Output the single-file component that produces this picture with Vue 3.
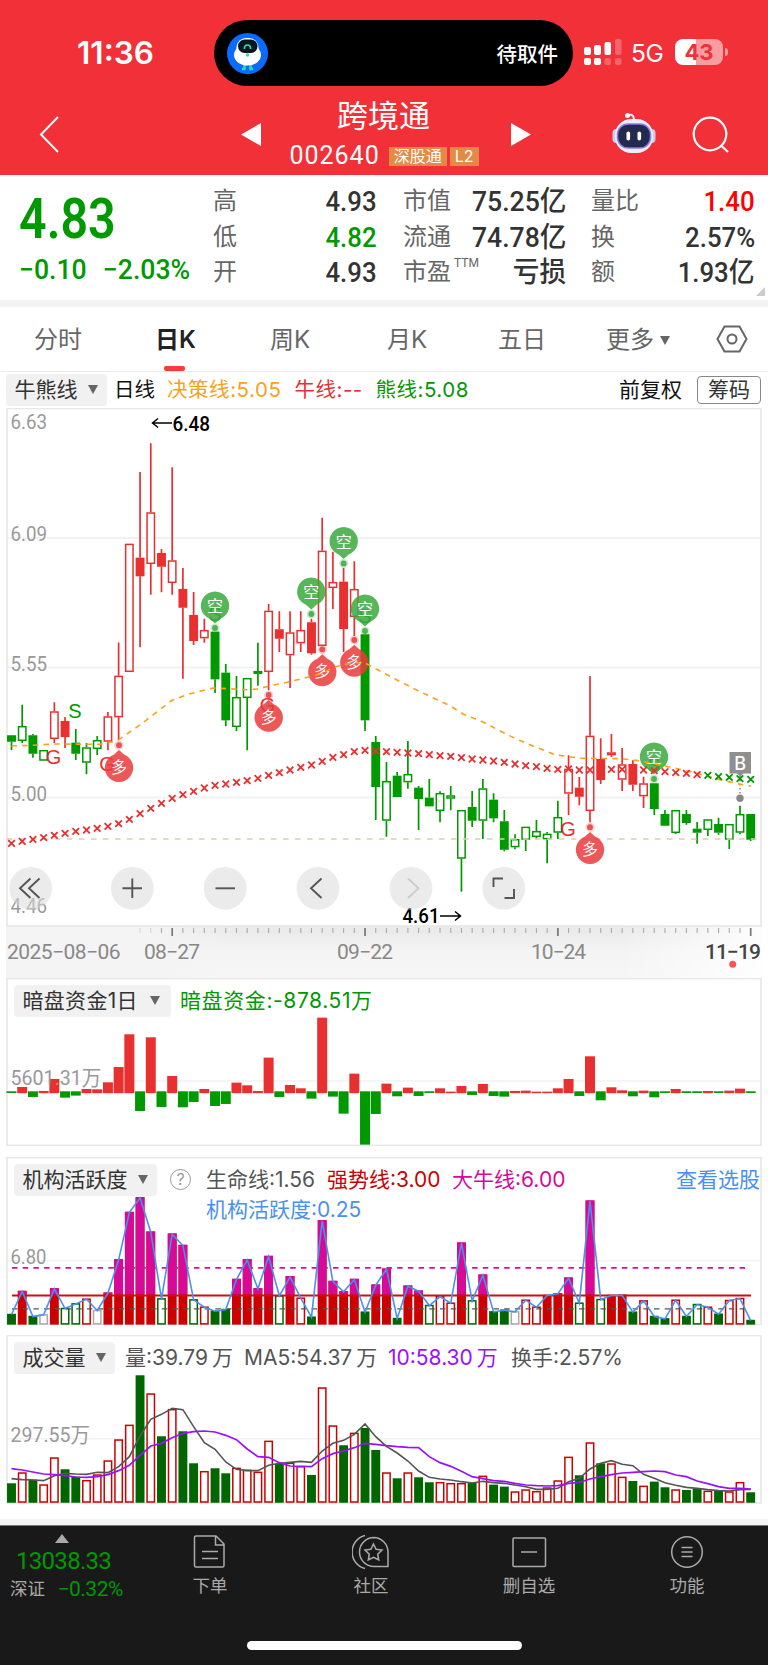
<script setup>
// Posición horizontal de cada día (70 sesiones)
const x = (i) => 11.5 + i * 10.713

const stats = [
  [{ k: '高', v: '4.93' }, { k: '低', v: '4.82', c: 'green' }, { k: '开', v: '4.93' }],
  [{ k: '市值', v: '75.25亿' }, { k: '流通', v: '74.78亿' }, { k: '市盈', sup: 'TTM', v: '亏损' }],
  [{ k: '量比', v: '1.40', c: 'red' }, { k: '换', v: '2.57%' }, { k: '额', v: '1.93亿' }]
]

// tipo, máximo, techo, suelo, mínimo. Mayúscula = vela rellena
const candles = [
  ['G', 735, 735.3, 741.7, 750], ['g', 704.7, 726, 741, 743], ['G', 734, 735.3, 753.7, 757.7], ['g', 750, 750, 760.7, 760.7],
  ['r', 702.3, 711.3, 739, 743], ['R', 717, 721, 737, 748], ['G', 729, 742.7, 753.7, 760], ['g', 743, 747.3, 762.7, 774.3],
  ['g', 736, 740, 749, 755], ['r', 712, 716.3, 741.7, 750.3], ['r', 642.5, 675.7, 717.3, 740], ['r', 543.7, 543.7, 672, 672],
  ['R', 472, 557.7, 576.3, 647.3], ['r', 443.3, 512.3, 564, 594.7], ['R', 549, 553, 566.7, 592.3], ['r', 467.3, 560.3, 583, 594.7],
  ['R', 568, 589, 607.7, 678.7], ['R', 592, 615, 641, 645], ['r', 618.7, 630, 638.3, 642.7], ['G', 631.7, 631.7, 679.3, 693],
  ['G', 664, 672.7, 720.3, 726.3], ['g', 676, 697, 727, 731], ['g', 678, 678, 698, 750.3], ['g', 642.7, 671, 673.9, 685.7],
  ['r', 604, 610.7, 672, 690.3], ['R', 611.3, 629.3, 638.7, 652], ['r', 611.3, 632.3, 655.3, 688], ['r', 611.3, 630, 643.3, 652],
  ['R', 618.7, 622.3, 653.3, 654.7], ['r', 517.7, 550.7, 646, 646], ['r', 551.7, 582, 588, 609], ['R', 568, 581.7, 629, 652],
  ['r', 561.3, 589, 617, 636], ['G', 634.3, 634.3, 720.3, 731], ['G', 736, 742, 787, 820], ['g', 762, 781, 820.7, 836.7],
  ['G', 772, 775.7, 797, 797], ['g', 741, 774, 782.3, 788.7], ['G', 786, 787.7, 799, 830], ['G', 779, 797.7, 806.3, 806.3],
  ['g', 791.3, 793, 811, 822.3], ['g', 786, 795.3, 798.7, 810.3], ['g', 810, 810, 858.7, 891.7], ['G', 791, 807, 820.7, 827],
  ['g', 779, 788.3, 820.7, 839], ['G', 793.3, 799.7, 818.3, 822.3], ['G', 810, 821.3, 849.7, 851.3], ['g', 834.3, 839, 847.3, 849.3],
  ['g', 826.7, 826.7, 839.7, 851], ['g', 820, 831, 837, 839], ['g', 832, 833.7, 839.3, 863.3], ['g', 800.7, 817, 832.7, 839],
  ['r', 755.3, 768.7, 793.7, 815], ['R', 777, 787.7, 796.7, 805.3], ['r', 676, 735.7, 811, 822.3], ['R', 738.3, 759, 780, 784],
  ['r', 734, 752.3, 755.3, 757], ['r', 748, 764.3, 779.7, 791], ['R', 760.3, 764, 784.7, 791], ['r', 776.7, 783.3, 796.3, 808],
  ['G', 783.3, 783.3, 809, 815], ['G', 810, 814, 825.7, 825.7], ['g', 810, 810, 833, 834], ['G', 810, 814, 823, 824.7],
  ['G', 822, 828.7, 832.7, 843.7], ['g', 819.3, 819.3, 830, 836], ['G', 817.7, 824, 832.7, 834.7], ['g', 824, 824, 839.7, 849],
  ['g', 805.7, 814, 832.7, 834.3], ['G', 814, 814, 839.7, 841]
]

// Línea toro/oso, dibujada con aspas
const bearLine = [
  610, 604, 598, 593, 586, 580, 574, 570, 565, 559, 551, 538, 521, 505, 490, 475, 464, 454, 444, 436, 432, 427, 422, 415,
  406, 398, 390, 382, 375, 364, 352, 344, 335, 331, 333, 335, 337, 339, 341, 344, 347, 349, 353, 357, 360, 363, 367,
  372, 377, 380, 385, 388, 387, 390, 390, 390, 388, 388, 389, 390, 392, 395, 398, 400, 404, 406, 410, 412, 416, 418
].map((v) => 640 + v / 3)

const cross = (i, y) => `M${x(i) - 3.3} ${y - 3.3}l6.6 6.6m0 -6.6l-6.6 6.6`

const decision =
  'M11.5 746L33 745.3L54 744L100 744.3L117 741L143 722.7L172 700.3L188 694.3L213 688L227 688.7L247 689.7L258 689L269 686L290 681.7L311 676.3' +
  'L322 673.7L333 667.5L354 662.3L367 664L397 680L418 690.7L450 705.7L463 714L483 722L508 735L528 744L555 754.7L581 758.3L621 758.7L641 761L668 766.7L695 772.7L721 780L741 784.3L751 786'

const shorts = [[215, 606], [311.3, 592], [343.7, 541.5], [365, 609], [654, 757]]
const longs = [[119, 767.5], [268.7, 717.3], [322.3, 671.7], [354.3, 662.3], [590, 849.5]]
const letters = [
  ['S', 75, 717.5], ['S', 215, 620.5], ['S', 365, 622.5], ['S', 654, 772],
  ['G', 53.5, 763.5], ['G', 107, 771], ['G', 267.5, 711.5], ['G', 568, 835.5]
]

const priceLabels = [['6.63', 429], ['6.09', 541], ['5.55', 670.5], ['5.00', 800.5], ['4.46', 912.5]]
const dates = [['2025-08-06', 7, 113.5], ['08-27', 144, 56], ['09-22', 337, 56], ['10-24', 531, 55]]
const ticks = Array.from({ length: 58 }, (_, n) => n + 12)
const majors = [15, 33, 51, 69]

// Flujo oculto: positivo rojo, negativo verde
const funds = [
  -2, 16, -14, 4, 40, -16, -10, 10, 9, 30, 76, 174, -56, 165, -44, 49, -45, -29, 10, -41, -35, 29, 21, 4,
  104, -14, 22, 12, -19, 224, -13, -64, 56, -157, -65, 26, -12, 14, -11, -2, 12, 2, 19, -8, 25, -11, -13,
  4, 5, 2, 2, 12, 40, -11, 108, -24, 15, 6, -12, 5, -15, -2, 10, -2, -2, 4, -2, 5, 11, -2
]

const activity = (
  'G1030 R961 G1036 w1031 R953 g1012 g998 r984 w1018 R966 R866 R724 R680 R783 g983 R789 R823 g986 r1008 G1020 G1015 R925 R866 R953 ' +
  'R856 g974 R917 r981 G1038 R749 R931 R962 R925 G1023 R942 R894 G1042 R945 R960 g1003 r976 r996 R816 g989 R912 G1022 G1017 ' +
  'w1022 r987 r1008 R973 R968 R921 g996 R690 g985 R973 R972 G1023 r989 G1036 G1043 r987 G1036 g1000 r1008 G1029 r988 r982 G1048'
).split(' ').map((s) => ({ t: s[0], y: 970 + s.slice(1) / 3 }))
const activityLine = activity.map((b, i) => `${x(i)},${b.y + 0.7}`).join(' ')

const volume = (
  'G475 r442 G464 r478 r397 G433 G455 r465 r448 r406 r343 r299 G151 r205 G334 r252 G319 G415 r438 G430 G445 r428 r434 r440 ' +
  'r347 G417 r413 r423 G450 r187 r301 G361 r323 G309 G375 r442 G460 r442 G457 G472 r471 r474 r474 G473 r452 G479 G485 ' +
  'r499 r493 r498 r487 r466 r395 G451 r352 G415 r415 r455 G468 r482 G470 G487 r493 G495 G492 r497 G497 r499 r471 G502'
).split(' ').map((s) => ({ t: s[0], y: 1325 + s.slice(1) / 3 }))

const line = (arr) => arr.map((v, i) => `${x(i)},${1325 + v / 3}`).join(' ')
const ma5 = line([
  461, 464, 465, 467, 452, 445, 447, 448, 442, 443, 425, 395, 333, 283, 268, 250, 254, 305, 353, 373, 411, 433, 437, 437,
  421, 415, 412, 409, 412, 378, 355, 346, 328, 297, 335, 364, 384, 408, 438, 457, 462, 465, 470, 474, 469, 473, 475,
  480, 485, 493, 493, 490, 470, 460, 432, 415, 407, 418, 422, 448, 460, 473, 481, 487, 490, 494, 497, 498, 494, 493
])
const ma10 = line([
  431, 435, 441, 447, 449, 452, 456, 457, 455, 449, 437, 421, 391, 363, 355, 338, 325, 320, 318, 321, 331, 344, 372, 395,
  397, 413, 423, 424, 425, 401, 386, 378, 368, 355, 358, 362, 365, 367, 368, 395, 413, 424, 439, 455, 461, 467, 469,
  475, 480, 482, 483, 482, 475, 472, 462, 455, 449, 444, 442, 440, 438, 440, 450, 455, 468, 476, 485, 490, 490, 492
])
</script>

<template>
  <div class="app">
    <header class="top">
      <div class="status">
        <span class="time">11:36</span>
        <div class="island">
          <svg width="41" height="41" viewBox="0 0 41 41">
            <circle cx="20.5" cy="20.5" r="20.5" fill="#0a6cff" />
            <path d="M17.500 31v5h-2.500M23.500 31v5h2.500" stroke="#1fe0b0" stroke-width="2.500" fill="none" />
            <ellipse cx="20.5" cy="22" rx="13.5" ry="10.5" fill="#fff" />
            <rect x="9.5" y="5" width="22" height="20" rx="9.5" fill="#fff" />
            <rect x="11" y="6.5" width="19.5" height="13.5" rx="6.5" fill="#0b1520" />
            <path d="M17.5 16v-1a3 3 0 0 1 6 0v1" stroke="#1fe0b0" stroke-width="1.6" fill="none" />
            <circle cx="20.5" cy="22" r="1.7" fill="#1fe0b0" />
          </svg>
          <span>待取件</span>
        </div>
        <svg class="signal" width="38" height="28" viewBox="0 0 38 28" fill="#fff">
          <rect x="0" y="8" width="7" height="8" rx="2" /><rect x="0" y="19" width="7" height="7" rx="2" />
          <rect x="10" y="6" width="7" height="10" rx="2" /><rect x="10" y="19" width="7" height="7" rx="2" />
          <rect x="20.5" y="3" width="6.5" height="13" rx="2" />
          <g opacity=".25"><rect x="20.5" y="19" width="6.5" height="7" rx="2" /><rect x="31" y="0" width="6.5" height="16" rx="2" /><rect x="31" y="19" width="6.5" height="7" rx="2" /></g>
        </svg>
        <span class="net">5G</span>
        <div class="battery"><b>43</b></div>
        <i class="nub"></i>
      </div>
      <div class="bar">
        <svg class="back" width="20" height="37" viewBox="0 0 20 37"><path d="M19 1L2 18.500L19 36" fill="none" stroke="#fff" stroke-width="2" /></svg>
        <svg class="prev" width="20" height="23"><path d="M0 11.500L20 0V23z" fill="#fff" /></svg>
        <div class="title">
          <h1>跨境通</h1>
          <div class="code"><span>002640</span><em>深股通</em><em class="l2">L2</em></div>
        </div>
        <svg class="next" width="20" height="23"><path d="M20 11.500L0 0V23z" fill="#fff" /></svg>
        <svg class="bot" width="44" height="42" viewBox="0 0 44 42">
          <path d="M17 3q5 -1 5 5" stroke="#e8ecfb" stroke-width="2" fill="none" /><circle cx="15.500" cy="3.500" r="2.500" fill="#fff" />
          <rect x="0.500" y="17" width="8" height="14" rx="4" fill="#c9cdf2" /><rect x="35.500" y="17" width="8" height="14" rx="4" fill="#c9cdf2" />
          <rect x="3" y="7" width="38" height="34" rx="16" fill="#eceefb" />
          <rect x="5.500" y="12" width="33" height="24" rx="10.500" fill="#222a4d" stroke="#8f7be8" stroke-width="1.500" />
          <rect x="14.500" y="19.500" width="3.600" height="9" rx="1.800" fill="#fff" /><rect x="25.500" y="19.500" width="3.600" height="9" rx="1.800" fill="#fff" />
        </svg>
        <svg class="search" width="38" height="38" viewBox="0 0 38 38" fill="none" stroke="#fff" stroke-width="2.200"><circle cx="18" cy="18" r="16.300" /><path d="M29 29.500L36 36" /></svg>
      </div>
    </header>

    <section class="quote">
      <div class="price">
        <strong>4.83</strong>
        <p><span>−0.10</span><span>−2.03%</span></p>
      </div>
      <dl v-for="(col, c) in stats" :key="c" :class="'col' + c">
        <div v-for="s in col" :key="s.k">
          <dt>{{ s.k }}<sup v-if="s.sup">{{ s.sup }}</sup></dt>
          <dd :class="s.c">{{ s.v }}</dd>
        </div>
      </dl>
      <i class="corner"></i>
    </section>

    <nav class="tabs">
      <span class="t1">分时</span>
      <span class="t2 active">日K</span>
      <span class="t3">周K</span>
      <span class="t4">月K</span>
      <span class="t5">五日</span>
      <span class="t6">更多<i class="caret"></i></span>
      <svg width="32" height="28" viewBox="0 0 32 28" fill="none" stroke="#666" stroke-width="2"><path d="M8.500 1.500H23.500L30.500 14L23.500 26.500H8.500L1.500 14z" /><circle cx="16" cy="14" r="4.500" /></svg>
    </nav>

    <div class="legend">
      <span class="chip">牛熊线<i class="caret"></i></span>
      <span class="day">日线</span>
      <span class="w1 orange">决策线:5.05</span>
      <span class="w2 bull">牛线:--</span>
      <span class="green">熊线:5.08</span>
      <span class="fq">前复权</span>
      <span class="cm">筹码</span>
    </div>

    <svg class="kline" width="768" height="570" viewBox="0 408 768 570">
      <defs>
        <linearGradient id="axis" x1="0" y1="0" x2="0" y2="1"><stop offset="0" stop-color="#e9e9e9" /><stop offset=".5" stop-color="#f4f4f4" /><stop offset="1" stop-color="#f6f6f6" /></linearGradient>
        <linearGradient id="left" x1="0" y1="0" x2="1" y2="0"><stop offset=".6" stop-color="#f4f4f4" /><stop offset="1" stop-color="#f4f4f4" stop-opacity="0" /></linearGradient>
        <linearGradient id="fade" x1="0" y1="0" x2="1" y2="0"><stop offset="0" stop-color="#fff" stop-opacity="0" /><stop offset="1" stop-color="#fff" stop-opacity=".9" /></linearGradient>
      </defs>
      <rect x="6" y="926" width="756" height="52" fill="url(#axis)" />
      <rect x="6" y="926" width="230" height="52" fill="url(#left)" />
      <rect x="620" y="926" width="142" height="52" fill="url(#fade)" />
      <path d="M7 538H761M7 667.500H761M7 797.500H761" stroke="#f2f2f2" stroke-width="2" />
      <rect x="7" y="408.500" width="754" height="517.500" fill="none" stroke="#e8e8e8" stroke-width="1.700" />

      <g class="din" font-size="21" fill="#999">
        <text v-for="p in priceLabels" :key="p[0]" x="10.500" :y="p[1]" textLength="36.500" lengthAdjust="spacingAndGlyphs">{{ p[0] }}</text>
      </g>

      <g v-for="(c, i) in candles" :key="i" :class="'k-' + c[0]">
        <path :d="`M${x(i)} ${c[1]}V${c[2]}M${x(i)} ${c[3]}V${c[4]}`" stroke-width="1.700" />
        <rect :x="x(i) - 3.700" :y="c[2] + 0.700" width="7.400" :height="Math.max(c[3] - c[2] - 1.400, 1.200)" stroke-width="1.500" />
      </g>

      <path d="M7 839H761" stroke="#e2cbab" stroke-width="1.500" stroke-dasharray="5.500 6.500" />
      <g class="letters" font-size="20" text-anchor="middle">
        <text v-for="(l, n) in letters" :key="n" :x="l[1]" :y="l[2]" :fill="l[0] === 'S' ? '#090' : '#e93030'">{{ l[0] }}</text>
      </g>

      <g fill="#3aa93c" fill-opacity=".85">
        <g v-for="(p, n) in shorts" :key="n">
          <path :d="`M${p[0]} ${p[1] + 17.500}l-5 -4.500a14.200 14.200 0 1 1 10 0z`" />
          <circle :cx="p[0]" :cy="p[1] + 22" r="4.600" fill-opacity=".25" />
          <circle :cx="p[0]" :cy="p[1] + 22" r="2.900" />
          <text :x="p[0]" :y="p[1] + 6" class="pin">空</text>
        </g>
      </g>
      <g fill="#e93b3b" fill-opacity=".85">
        <g v-for="(p, n) in longs" :key="n">
          <path :d="`M${p[0]} ${p[1] - 17.500}l-5 4.500a14.200 14.200 0 1 0 10 0z`" />
          <circle :cx="p[0]" :cy="p[1] - 22.300" r="4.600" fill-opacity=".25" />
          <circle :cx="p[0]" :cy="p[1] - 22.300" r="2.900" />
          <text :x="p[0]" :y="p[1] + 5.500" class="pin">多</text>
        </g>
      </g>

      <path d="M740 776V794" stroke="#888" stroke-width="1.500" stroke-dasharray="1.500 2.500" />
      <path d="M729.500 752h21.500v21.500h-7.500l-3.300 3l-3.300 -3h-7.400z" fill="#8f8f8f" />
      <text x="740.200" y="769.500" fill="#fff" font-size="18" text-anchor="middle" class="b">B</text>
      <circle cx="740" cy="798.300" r="3.700" fill="#888" />

      <path :d="decision" fill="none" stroke="#f9a11b" stroke-width="1.600" stroke-dasharray="5.500 5.200" />
      <path v-for="(y, i) in bearLine" :key="'c' + i" :d="cross(i, y)" :stroke="i > 64 ? '#090' : '#e93030'" stroke-width="1.800" />

      <g stroke="#000" stroke-width="1.500" fill="none">
        <path d="M172 423H153M158 418.500L152.500 423L158 427.500" />
        <path d="M440 916H460M455 911.500L460.500 916L455 920.500" />
      </g>
      <g class="din" font-size="21" font-weight="500" fill="#000">
        <text x="172.500" y="430.500" textLength="37.500" lengthAdjust="spacingAndGlyphs">6.48</text>
        <text x="402.500" y="923" textLength="37" lengthAdjust="spacingAndGlyphs">4.61</text>
      </g>

      <g fill="#d9d9d9" fill-opacity=".53">
        <circle v-for="cx in [30.700, 132.300, 225.200, 318, 411, 503.700]" :key="cx" :cx="cx" cy="888.300" r="21.400" />
      </g>
      <g fill="none" stroke="#555" stroke-width="1.900">
        <path d="M30.500 878.500L20 888.300L30.500 898M39.500 878.500L29 888.300L39.500 898" />
        <path d="M122.500 888.300H142M132.300 878.500V898" />
        <path d="M215.500 888.300H235" />
        <path d="M321.500 878.500L311 888.300L321.500 898" />
        <path d="M408 878.500L418.500 888.300L408 898" stroke="#ccc" />
        <path d="M493.500 887V878.500H503M514 889V898H504.500" />
      </g>

      <path v-for="i in ticks" :key="'t' + i" :d="`M${x(i)} 928v${majors.includes(i) ? 8 : 5}`" :stroke="majors.includes(i) ? '#777' : '#aaa'" :stroke-width="majors.includes(i) ? 1.700 : 1.100" :opacity="i < 14 ? 0.400 : 1" />
      <g class="din" font-size="21" fill="#888">
        <text v-for="d in dates" :key="d[0]" :x="d[1]" y="958.500" :textLength="d[2]">{{ d[0].replaceAll('-', '−') }}</text>
        <text x="705" y="958.500" textLength="56" fill="#444" font-weight="500">11−19</text>
      </g>
      <circle cx="732.700" cy="964.200" r="3.500" fill="#fa5555" />
    </svg>

    <section class="panel">
      <svg width="768" height="168" viewBox="0 978 768 168">
        <path d="M7 1081H761" stroke="#f2f2f2" stroke-width="1.500" />
        <rect x="7" y="978.500" width="754" height="167" class="frame" />
        <rect v-for="(v, i) in funds" :key="i" :x="x(i) - 5" width="10" :y="v > 0 ? 1092.300 - v / 3 : 1091.300" :height="Math.abs(v) / 3 + (v > 0 ? 0.900 : 1)" :fill="v > 0 ? '#e93030' : '#009a00'" />
        <text x="10.500" y="1084.500" class="din" font-size="21" fill="#999" textLength="91" lengthAdjust="spacingAndGlyphs">5601.31万</text>
      </svg>
      <div class="row">
        <span class="chip c1">暗盘资金1日<i class="caret"></i></span>
        <span class="green v1">暗盘资金:-878.51万</span>
      </div>
    </section>

    <section class="panel">
      <svg width="768" height="168" viewBox="0 1156.500 768 168">
        <path d="M7 1260.300H761" stroke="#f2f2f2" stroke-width="1.500" />
        <rect x="7" y="1157" width="754" height="167" class="frame" />
        <g v-for="(b, i) in activity" :key="i" :class="'a-' + b.t">
          <rect :x="x(i) - 3.700" width="7.400" :y="b.y + 0.700" :height="1322.700 - b.y" stroke-width="1.500" />
          <rect v-if="b.t === 'R' && b.y < 1294" :x="x(i) - 4.400" width="8.800" :y="b.y" :height="1294 - b.y" class="hot" />
        </g>
        <path d="M12 1267.400H747" stroke="#d4109a" stroke-width="1.600" stroke-dasharray="5.500 5.200" />
        <path d="M12 1295H751" stroke="#cc1010" stroke-width="1.900" />
        <path d="M12 1308.400H747" stroke="#555" stroke-width="1.400" stroke-dasharray="5.500 5.200" />
        <polyline :points="activityLine" fill="none" stroke="#4a90f0" stroke-width="1.600" />
        <text x="10.500" y="1263" class="din" font-size="21" fill="#999" textLength="36" lengthAdjust="spacingAndGlyphs">6.80</text>
      </svg>
      <div class="row">
        <span class="chip c2">机构活跃度<i class="caret"></i></span>
        <span class="help">?</span>
        <span class="gray v2">生命线:1.56</span>
        <span class="dred v3">强势线:3.00</span>
        <span class="pink">大牛线:6.00</span>
        <span class="blue link">查看选股</span>
      </div>
      <div class="sub blue">机构活跃度:0.25</div>
    </section>

    <section class="panel last">
      <svg width="768" height="169" viewBox="0 1335 768 169">
        <path d="M7 1438.700H761" stroke="#f2f2f2" stroke-width="1.500" />
        <rect x="7" y="1335.500" width="754" height="167.500" class="frame" />
        <text x="10.500" y="1442" class="din" font-size="21" fill="#999" textLength="79.500" lengthAdjust="spacingAndGlyphs">297.55万</text>
        <rect v-for="(b, i) in volume" :key="i" :class="'a-' + b.t" :x="x(i) - 3.700" width="7.400" :y="b.y + 0.700" :height="1501.300 - b.y" stroke-width="1.500" />
        <polyline :points="ma5" fill="none" stroke="#555" stroke-width="1.600" />
        <polyline :points="ma10" fill="none" stroke="#9b10ff" stroke-width="1.700" />
      </svg>
      <div class="row">
        <span class="chip c3">成交量<i class="caret"></i></span>
        <span class="gray u1">量:39.79<s></s>万</span>
        <span class="gray u2">MA5:54.37<s></s>万</span>
        <span class="violet u3">10:58.30<s></s>万</span>
        <span class="gray">换手:2.57%</span>
      </div>
    </section>

    <footer class="foot">
      <div class="index">
        <i class="up"></i>
        <b>13038.33</b>
        <p><span>深证</span><em>−0.32%</em></p>
      </div>
      <div class="item f1">
        <svg width="36" height="36" viewBox="0 0 36 36"><path d="M4 2H24L32 10V31.500a1.500 1.500 0 0 1 -1.500 1.500H4a1.500 1.500 0 0 1 -1.500 -1.500V3.500A1.500 1.500 0 0 1 4 2zM23.500 2V11H32M10 17.500H26M10 24.500H26" /></svg>
        <span>下单</span>
      </div>
      <div class="item f2">
        <svg width="38" height="36" viewBox="0 0 38 36"><path d="M13 1.500A17 17 0 0 0 13 34.500M22 3.500a14.500 14.500 0 0 0 0 29H36V18A14.500 14.500 0 0 0 22 3.500zM21.500 10l2.600 5.300l5.900 .8l-4.300 4.100l1 5.800l-5.200 -2.700l-5.200 2.700l1 -5.800l-4.300 -4.100l5.900 -.8z" /></svg>
        <span>社区</span>
      </div>
      <div class="item f3">
        <svg width="36" height="36" viewBox="0 0 36 36"><rect x="2" y="4" width="32.500" height="28.500" rx="1" /><path d="M10 18H26" /></svg>
        <span>删自选</span>
      </div>
      <div class="item f4">
        <svg width="36" height="36" viewBox="0 0 36 36"><circle cx="18" cy="18" r="15.300" /><path d="M12.500 13.500H23.500M12.500 18H23.500M12.500 22.500H23.500" /></svg>
        <span>功能</span>
      </div>
      <div class="home"></div>
    </footer>
  </div>
</template>

<style>
body {
  margin: 0;
  background: #fff;
}
</style>

<style scoped>
.app {
  width: 768px;
  height: 1665px;
  overflow: hidden;
  font-family: Inter, "Noto Sans CJK SC", sans-serif;
  color: #333;
  white-space: nowrap;
  display: flex;
  flex-direction: column;
}
.app * {
  box-sizing: border-box;
}
i, em {
  font-style: normal;
}
p, dl, dd, h1 {
  margin: 0;
}

/* Cabecera */
.top {
  height: 175px;
  flex: none;
  background: #f23038;
  color: #fff;
}
.status {
  height: 92px;
  padding-top: 20px;
  display: flex;
  align-items: flex-start;
}
.time {
  width: 137px;
  margin-left: 77px;
  font-size: 31.5px;
  font-weight: 600;
  line-height: 66px;
}
.island {
  width: 359px;
  height: 66px;
  border-radius: 33px;
  background: #000;
  display: flex;
  align-items: center;
  justify-content: space-between;
  padding: 0 15px 0 13px;
  font-size: 20.5px;
  font-weight: 500;
}
.signal {
  margin: 19px 0 0 11px;
}
.net {
  width: 44px;
  margin-left: 9px;
  font-size: 24.5px;
  line-height: 67px;
  letter-spacing: -0.5px;
}
.battery {
  width: 48px;
  height: 26px;
  margin-top: 19px;
  border-radius: 8px;
  background: linear-gradient(90deg, #fff 43%, #f99da0 43%);
  color: #f23038;
  font-size: 22px;
  line-height: 27px;
  text-align: center;
}
.nub {
  width: 3px;
  height: 8px;
  margin: 28px 0 0 1.5px;
  border-radius: 0 3px 3px 0;
  background: #f99da0;
}
.bar {
  height: 83px;
  display: flex;
  align-items: flex-start;
}
.back {
  margin: 24px 0 0 39px;
}
.prev {
  margin: 31px 0 0 182px;
}
.title {
  width: 250px;
  padding-right: 4px;
  display: flex;
  flex-direction: column;
  align-items: center;
}
.title h1 {
  padding-right: 1px;
  font-size: 31px;
  line-height: 44px;
  margin-top: 2px;
  font-weight: 400;
}
.code {
  display: flex;
  align-items: center;
  height: 20px;
  margin-top: 8px;
}
.code span {
  font-family: Roboto, sans-serif;
  font-size: 25px;
  line-height: 20px;
  height: 20px;
  letter-spacing: 1px;
  margin-right: 9px;
}
.code em {
  height: 19px;
  padding: 0 5px;
  margin-right: 3px;
  background: #e38b45;
  font-size: 16px;
  line-height: 18px;
}
.code .l2 {
  margin-right: 0;
}
.next {
  margin-top: 31px;
}
.bot {
  margin: 20px 0 0 81px;
}
.search {
  margin: 24px 0 0 36px;
}

/* Cotización */
.quote {
  position: relative;
  height: 132px;
  flex: none;
  border-bottom: 7px solid #f3f3f3;
  display: flex;
  font-family: Roboto, "Noto Sans CJK SC", sans-serif;
}
.green {
  color: #009900;
}
.price {
  width: 213px;
  padding-left: 18.5px;
  color: #009900;
}
.price strong {
  display: block;
  height: 72px;
  margin-top: 8px;
  font-size: 55px;
  font-weight: 600;
  line-height: 72px;
  transform: scaleX(0.88);
  transform-origin: 0 0;
}
.price p {
  display: flex;
  gap: 17px;
  height: 32px;
  margin-top: -1px;
  font-size: 28px;
  font-weight: 500;
  line-height: 32px;
  transform: scaleX(0.95);
  transform-origin: 0 0;
}
.quote dl {
  padding-top: 9px;
}
.quote dl div {
  display: flex;
  justify-content: space-between;
  height: 35.5px;
  line-height: 35.5px;
}
.quote dt {
  font-size: 24px;
  color: #666;
}
.quote sup {
  font-size: 12px;
  line-height: 0;
  margin-left: 3px;
  position: relative;
  top: -4px;
}
.quote dd {
  font-size: 28px;
  font-weight: 500;
  transform: scaleX(0.92);
  transform-origin: 100% 0;
}
.quote .col1 dd {
  transform: scaleX(0.95);
}
.quote dd.red {
  color: #ff0000;
}
.col0 {
  width: 164px;
}
.col1 {
  width: 163px;
  margin-left: 26px;
}
.col2 {
  width: 164px;
  margin-left: 25px;
}
.corner {
  position: absolute;
  right: 3px;
  bottom: 4px;
  border-left: 9px solid transparent;
  border-bottom: 9px solid #ccc;
}

/* Pestañas */
.tabs {
  height: 65px;
  flex: none;
  display: flex;
  align-items: center;
  padding-left: 34px;
  border-bottom: 1.5px solid #ececec;
  font-size: 24px;
  line-height: 36px;
  color: #666;
}
.tabs span {
  margin-top: 1px;
}
.t1 { width: 121px; }
.t2 { width: 115px; }
.t3 { width: 117px; }
.t4 { width: 111px; }
.t5 { width: 108px; }
.t6 { width: 110px; }
.tabs .active {
  position: relative;
  color: #222;
  font-weight: 600;
}
.tabs .active::after {
  content: '';
  position: absolute;
  left: 9px;
  bottom: -13px;
  width: 21px;
  height: 5px;
  border-radius: 2px;
  background: #fa3c32;
}
.caret {
  display: inline-block;
  margin-left: 10px;
  border: 5.5px solid transparent;
  border-top: 9px solid #666;
  border-bottom: 0;
  vertical-align: 3px;
}
.t6 .caret {
  margin-left: 6px;
}

/* Leyenda */
.legend {
  height: 36px;
  flex: none;
  display: flex;
  align-items: center;
  padding: 0 7px 0 6px;
  font-size: 20.5px;
  line-height: 30px;
}
.legend span {
  flex: none;
}
.chip {
  flex: none;
  height: 32px;
  line-height: 31px;
  padding-left: 8.5px;
  border-radius: 4px;
  background: #f1f1f1;
  color: #333;
  font-size: 21px;
}
.legend .chip {
  width: 101px;
}
.day {
  width: 53px;
  margin-left: 7px;
  color: #111;
}
.w1 {
  width: 127.5px;
  letter-spacing: 0.55px;
}
.w2 {
  width: 81px;
  letter-spacing: 0.5px;
}
.legend .green {
  letter-spacing: 0.5px;
}
.orange { color: #f9a11b; }
.bull { color: #e93030; }
.legend .fq {
  margin-left: auto;
  color: #111;
  font-size: 21px;
}
.legend .cm {
  width: 64px;
  height: 28px;
  margin-left: 15px;
  border: 1px solid #888;
  border-radius: 4px;
  font-size: 21px;
  line-height: 25px;
  text-align: center;
}

/* Gráficos */
.kline {
  flex: none;
  display: block;
}
.din {
  font-family: Roboto, "Noto Sans CJK SC", sans-serif;
}
.letters {
  font-family: "Liberation Sans", sans-serif;
}
.b {
  font-weight: 500;
}
.pin {
  fill: #fff;
  fill-opacity: 1;
  font-size: 16px;
  text-anchor: middle;
}
.k-r { stroke: #e93030; fill: #fff; }
.k-R { stroke: #e93030; fill: #e93030; }
.k-g { stroke: #009900; fill: #fff; }
.k-G { stroke: #009900; fill: #009900; }
.a-r { stroke: #cc0000; fill: #fff; }
.a-R { stroke: #cc0000; fill: #cc0000; }
.a-g { stroke: #006600; fill: #fff; }
.a-G { stroke: #006600; fill: #006600; }
.a-w { stroke: #aaa; fill: #fff; }
.hot {
  stroke: none;
  fill: #d60a96;
}
.frame {
  fill: none;
  stroke: #e8e8e8;
  stroke-width: 1.7px;
}
.panel {
  position: relative;
  height: 168px;
  flex: none;
  margin-bottom: 10.5px;
}
.panel > svg {
  position: absolute;
  left: 0;
  top: 0;
}
.row {
  position: relative;
  display: flex;
  align-items: center;
  padding: 7px 7px 0 14px;
  font-size: 21px;
  line-height: 30px;
}
.c1 {
  width: 157px;
  letter-spacing: 0.3px;
}
.c1 .caret {
  margin-left: 12px;
}
.c2 { width: 143px; }
.c3 { width: 101px; }
.v1 {
  margin-left: 9px;
  letter-spacing: 0.6px;
}
.help {
  width: 21px;
  height: 21px;
  margin: 0 15px 0 13px;
  border: 1.5px solid #999;
  border-radius: 50%;
  color: #999;
  font-size: 16px;
  line-height: 18px;
  text-align: center;
}
.v2 { width: 121px; }
.v3 { width: 125px; }
.gray { color: #555; }
.dred { color: #c00; }
.pink { color: #d60a96; }
.blue { color: #4a90f0; }
.violet { color: #9b10ff; }
.row .link {
  margin-left: auto;
  margin-right: 1px;
}
.sub {
  position: relative;
  margin-left: 206px;
  font-size: 21px;
  line-height: 28px;
}
.u1 { width: 119px; margin-left: 10px; }
.u2 { width: 144px; }
.u3 { width: 123px; }
.row s {
  display: inline-block;
  width: 4px;
}
.last {
  margin-bottom: 22px;
}

/* Barra inferior */
.foot {
  position: relative;
  flex: 1;
  display: flex;
  border-top: 1px solid #777;
  box-shadow: 0 -6px 0 #f4f4f4;
  background: #191919;
  color: #aaa;
}
.index {
  width: 176px;
  padding-left: 10px;
  font-family: Roboto, "Noto Sans CJK SC", sans-serif;
}
.up {
  display: block;
  width: 0;
  margin: 8px 0 0 45px;
  border: 7.5px solid transparent;
  border-top: 0;
  border-bottom: 9px solid #aaa;
}
.index b {
  display: block;
  margin: 4px 0 0 6px;
  color: #009900;
  font-size: 24px;
  font-weight: 400;
  line-height: 28px;
  letter-spacing: -0.7px;
}
.index p {
  display: flex;
  margin-top: 1px;
  font-size: 17.5px;
  line-height: 26px;
}
.index em {
  margin-left: 12.5px;
  color: #009900;
  font-size: 21px;
  letter-spacing: -0.5px;
}
.item {
  width: 70px;
  padding-top: 8px;
  display: flex;
  flex-direction: column;
  align-items: center;
  font-size: 17.5px;
}
.item svg {
  flex: none;
  fill: none;
  stroke: #aaa;
  stroke-width: 1.5px;
}
.item span {
  margin-top: 4px;
  line-height: 24px;
}
.f1 { margin-left: -1px; }
.f2 { margin-left: 91px; }
.f3 { margin-left: 88px; }
.f4 { margin-left: 88px; }
.home {
  position: absolute;
  left: 247px;
  bottom: 15px;
  width: 275px;
  height: 9px;
  border-radius: 5px;
  background: #fff;
}
</style>
